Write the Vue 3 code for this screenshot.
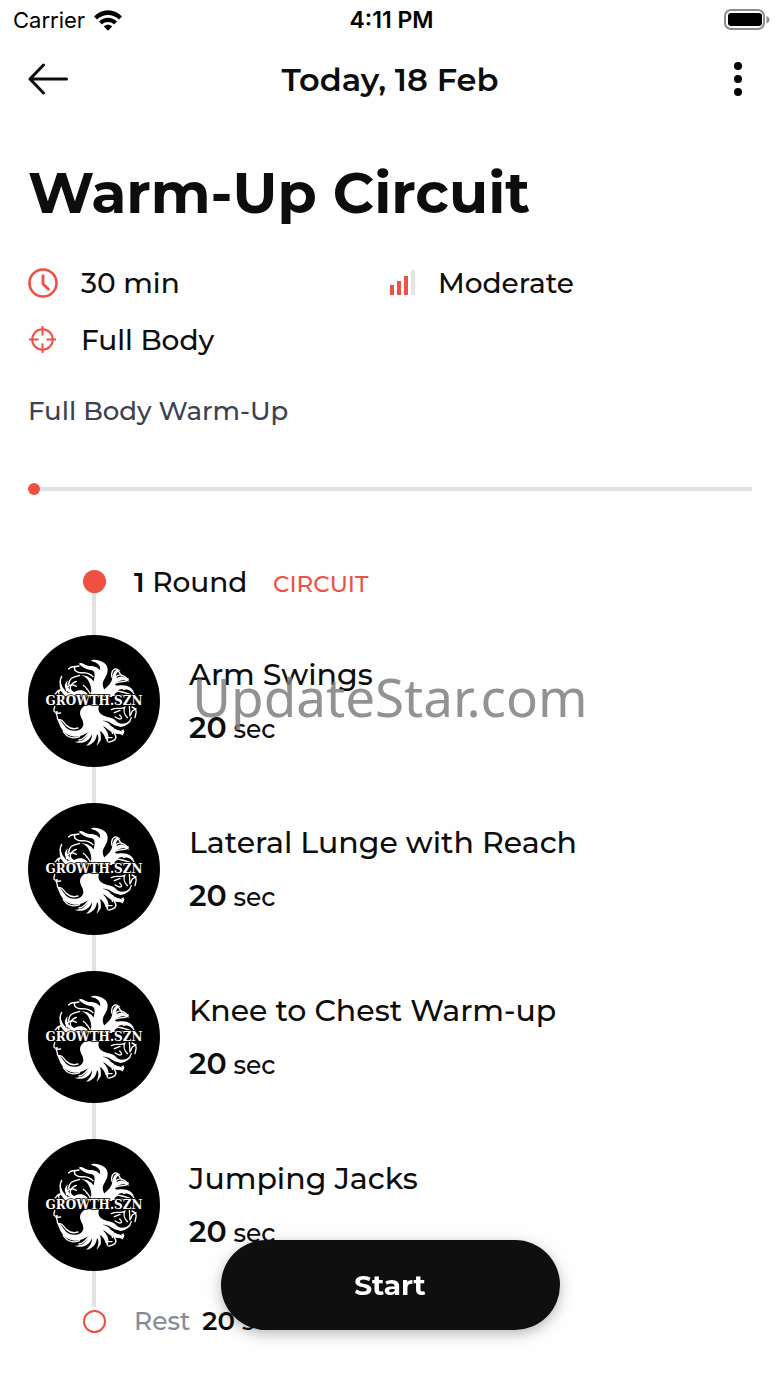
<template>
	<div class="page">
		<div class="status-bar">
			<div class="carrier">
				<span>Carrier</span>
				<svg class="wifi" viewBox="0 0 28 21" aria-hidden="true">
					<path d="M0 6.400C8-1.800 20-1.800 28 6.400L25 9.600C18.800 3.400 9.200 3.400 3 9.600Z" />
					<path d="M5 11.500C10.200 6.500 17.800 6.500 23 11.500L20 14.500C16.500 11.300 11.500 11.300 8 14.500Z" />
					<path d="M9.800 16.500C12.200 14.200 15.800 14.200 18.200 16.500L14 20.800Z" />
				</svg>
			</div>
			<time class="clock">4:11 PM</time>
			<svg class="battery" viewBox="0 0 46 22" aria-hidden="true">
				<rect x="1" y="1" width="39" height="19" rx="6" fill="none" stroke="#8c8c8c" stroke-width="2" />
				<rect x="4" y="4" width="34" height="13" rx="3" fill="#000" />
				<path d="M42.500 7v7.500c4-1.500 4-6 0-7.500z" fill="#8c8c8c" />
			</svg>
		</div>

		<header class="nav">
			<button class="icon-btn" type="button" aria-label="Back">
				<svg class="arrow" viewBox="0 0 40 32" aria-hidden="true">
					<path d="M15.500 2L2 16l13.500 14M2 16h36.500" />
				</svg>
			</button>
			<span class="nav-title">Today, 18 Feb</span>
			<button class="icon-btn more" type="button" aria-label="More options">
				<svg class="dots" viewBox="0 0 8 36" aria-hidden="true">
					<circle cx="4" cy="5" r="4" />
					<circle cx="4" cy="18" r="4" />
					<circle cx="4" cy="31" r="4" />
				</svg>
			</button>
		</header>

		<main class="content">
			<h1>Warm-Up Circuit</h1>

			<div class="facts">
				<div class="fact">
					<svg class="fact-icon" viewBox="0 0 30 30" aria-hidden="true">
						<circle cx="15" cy="15" r="13.500" fill="none" stroke="#ec5245" stroke-width="2.600" />
						<path d="M15 6.500V16l6.200 6" fill="none" stroke="#ec5245" stroke-width="2.800" />
					</svg>
					<span>30 min</span>
				</div>
				<div class="fact">
					<svg class="fact-icon level" viewBox="0 0 25 30" aria-hidden="true">
						<g fill="#ec5245">
							<rect x="0" y="17" width="4" height="10" />
							<rect x="7" y="13" width="4" height="14" />
							<rect x="14" y="8" width="4" height="19" />
						</g>
						<rect x="21" y="2" width="4" height="25" fill="#e4e4e4" />
					</svg>
					<span>Moderate</span>
				</div>
				<div class="fact">
					<svg class="fact-icon" viewBox="0 0 30 30" aria-hidden="true">
						<g fill="none" stroke="#ec5245" stroke-width="2">
							<circle cx="14.500" cy="14.500" r="10.300" />
							<path d="M14.500 1v9.500M14.500 18.500v9.500M1 14.500h9.500M18.500 14.500h9.500" />
						</g>
					</svg>
					<span>Full Body</span>
				</div>
			</div>

			<p class="summary">Full Body Warm-Up</p>

			<div class="progress"><span class="progress-dot"></span></div>

			<section class="timeline">
				<div class="step round">
					<div class="rail">
						<span class="dot"></span>
						<span class="line"></span>
					</div>
					<h2><strong>1</strong> Round <span class="tag">CIRCUIT</span></h2>
				</div>

				<div v-for="exercise in exercises" :key="exercise.name" class="step exercise">
					<div class="rail">
						<svg class="avatar" viewBox="24 30 396 396" role="img" aria-label="Growth.szn">
							<circle cx="222" cy="228" r="198" />
							<g fill="#fff">
								<!-- trunk and crown -->
								<path d="M176 116C187 109 194 122 209 123C226 123 233 128 240 135C243 119 230 111 211 107C245 104 264 116 263 135C262 157 245 164 249 184C252 200 265 201 276 190L267 216H208C216 205 216 188 206 169C201 159 193 155 184 151C202 151 214 160 221 169C225 151 226 140 216 136C199 132 190 130 176 116Z" />
								<path d="M253 193C270 178 275 171 277 158C279 142 285 131 302 135C292 140 287 146 288 160C300 153 316 152 329 171C316 164 303 163 291 172C281 181 285 183 299 181C321 178 337 187 342 202C326 190 312 190 297 194L275 216H249Z" />
								<path d="M210 216C195 192 177 193 163 201C144 194 139 184 143 166C129 179 133 195 150 204C133 202 120 188 122 155C115 180 119 203 141 216Z" />
								<!-- roots -->
								<path d="M196 241C174 254 179 271 187 284C199 309 175 322 151 316C131 309 130 289 115 282C117 307 132 327 153 333C174 339 191 330 205 322C200 343 184 351 164 350C185 359 207 351 216 328C219 344 207 356 198 362C220 360 230 342 231 326C239 337 234 351 229 363C245 351 244 333 239 319C253 322 254 341 265 355C263 333 273 330 248 303C259 307 266 318 278 323C292 330 302 324 310 332C307 312 296 319 280 309C270 301 265 289 247 288C267 284 276 301 292 303C312 306 325 297 335 287C316 296 300 301 289 289C278 276 259 279 244 268C234 260 234 250 237 241Z" />
							</g>
							<g fill="none" stroke="#fff" stroke-linecap="round" stroke-width="4">
								<path d="M146 132C153 122 166 126 177 123M165 126C159 136 172 145 187 143C201 143 210 146 219 155M217 107C230 105 248 111 253 119M276 157C272 139 281 129 293 133M287 158C296 143 310 150 324 163M305 153L292 134M287 174C307 166 320 175 325 162" />
								<path d="M125 154C116 169 122 186 133 197M146 178C148 154 166 157 179 151M158 201C143 190 154 174 169 169M190 181C201 189 206 198 212 209M169 184C151 174 139 184 139 198M106 207C118 188 130 193 141 211M117 209C113 199 121 193 129 195M310 193C321 190 333 192 342 207M273 206C294 193 312 202 330 208" />
								<path d="M104 245C98 262 105 262 111 262M111 259C108 275 114 288 125 302M118 284C131 282 133 301 145 306M130 320C140 336 158 343 179 335M177 345C187 344 195 338 203 326M219 329C217 344 211 353 205 359M239 323L240 346M252 321L260 337L276 338M283 326C292 337 289 346 267 351M306 317C308 330 314 324 309 315" />
								<path d="M274 254C289 246 301 254 314 247C310 257 313 270 323 278M283 263L300 256M299 270C313 284 298 285 286 276M328 242L330 274L337 258L348 251M336 246C354 252 348 264 345 278M334 278C330 292 315 303 300 304M278 307L277 326M108 265L122 264M141 302C150 311 160 314 174 309" />
								<path d="M112 211H340" />
							</g>
							<text class="brand" x="222" y="240" text-anchor="middle">GROWTH.SZN</text>
						</svg>
						<span class="line"></span>
					</div>
					<div class="details">
						<h3>{{ exercise.name }}</h3>
						<p><strong>{{ exercise.seconds }}</strong> sec</p>
					</div>
				</div>

				<div class="step rest">
					<div class="rail"><span class="dot hollow"></span></div>
					<p><span class="rest-label">Rest</span><strong>20</strong> sec</p>
				</div>
			</section>
		</main>

		<div class="watermark">UpdateStar.com</div>

		<div class="footer">
			<button class="start-btn" type="button">Start</button>
		</div>
	</div>
</template>

<script setup>
import { ref } from 'vue';

const exercises = ref([
	{ name: 'Arm Swings', seconds: 20 },
	{ name: 'Lateral Lunge with Reach', seconds: 20 },
	{ name: 'Knee to Chest Warm-up', seconds: 20 },
	{ name: 'Jumping Jacks', seconds: 20 }
]);
</script>

<style>
body { background: #fefefe; }
</style>

<style scoped>
.page {
	position: relative;
	min-height: 100vh;
	box-sizing: border-box;
	padding-bottom: 48px;
	background: #fefefe;
	color: #0d0d0d;
	font-family: Montserrat, Inter, sans-serif;
	font-size: 28px;
	font-weight: 500;
}

h1, h2, h3, p { margin: 0; font-weight: 500; }
strong { font-weight: 600; }

.status-bar {
	display: grid;
	grid-template-columns: 1fr auto 1fr;
	align-items: center;
	height: 40px;
	padding: 0 10px 0 13px;
	font-family: Inter, sans-serif;
	font-size: 22px;
	font-weight: 400;
	color: #000;
}

.carrier { display: flex; align-items: center; gap: 9px; }
.wifi { width: 28px; height: 21px; }
.clock { font-size: 23px; font-weight: 600; }
.battery { width: 46px; height: 22px; justify-self: end; }

.nav {
	display: grid;
	grid-template-columns: 1fr auto 1fr;
	align-items: center;
	height: 78px;
	padding: 0 28px;
}

.nav-title { font-size: 32px; font-weight: 600; }

.icon-btn {
	display: flex;
	justify-self: start;
	padding: 0;
	border: 0;
	background: none;
	cursor: pointer;
}

.icon-btn.more { justify-self: end; padding: 0 10px; }

.arrow {
	width: 40px;
	height: 32px;
	fill: none;
	stroke: #0d0d0d;
	stroke-width: 3;
	stroke-linecap: round;
	stroke-linejoin: round;
}

.dots { width: 8px; height: 36px; }

.content { padding: 39px 28px 0; }

h1 {
	font-size: 57px;
	font-weight: 700;
	line-height: 72px;
}

.facts {
	display: grid;
	grid-template-columns: 1fr 1fr;
	margin-top: 25px;
}

.fact {
	display: flex;
	align-items: center;
	gap: 23px;
	height: 57px;
}

.fact-icon { width: 30px; height: 30px; }
.fact-icon.level { width: 25px; }

.summary {
	margin-top: 25px;
	font-size: 26px;
	line-height: 36px;
	color: #3c4250;
}

.progress {
	display: flex;
	align-items: center;
	height: 12px;
	margin-top: 54px;
	background: linear-gradient(#e0e2e2, #e0e2e2) center / 100% 4px no-repeat;
}

.progress-dot {
	width: 12px;
	height: 12px;
	border-radius: 50%;
	background: #f05042;
}

.timeline { margin-top: 75px; }

.step { display: flex; }

.rail {
	display: flex;
	flex-direction: column;
	align-items: center;
	width: 132px;
}

.line {
	flex: 1;
	width: 4px;
	background: #e0e2e2;
}

.dot {
	box-sizing: border-box;
	width: 23px;
	height: 23px;
	border-radius: 50%;
	background: #f05042;
}

.dot.hollow {
	border: 2px solid #f05042;
	background: none;
}

.round { height: 65px; }

.round h2 {
	height: 24px;
	margin-left: -26px;
	font-size: 28px;
	line-height: 24px;
}

.tag {
	margin-left: 18px;
	font-size: 23px;
	font-weight: 500;
	color: #ec5245;
}

.exercise { height: 168px; }

.avatar { width: 132px; height: 132px; }

.brand {
	font-family: "DejaVu Serif", serif;
	font-size: 36px;
	font-weight: 700;
	fill: #fff;
	stroke: #000;
	stroke-width: 5px;
	paint-order: stroke;
}

.details { padding: 20px 0 0 29px; }

h3 {
	font-size: 30px;
	line-height: 40px;
}

.details p {
	margin-top: 13px;
	font-size: 25px;
	line-height: 40px;
}

.details strong { font-size: 30px; }

.rest { align-items: center; height: 28px; }
.rest p { margin-left: -26px; font-size: 25px; }
.rest strong { font-size: 26px; }
.rest-label { margin-right: 12px; color: #858b99; }

.watermark {
	position: absolute;
	top: 659px;
	left: 0;
	right: 0;
	text-align: center;
	font-family: "Noto Sans", sans-serif;
	font-size: 53px;
	font-weight: 400;
	line-height: 76px;
	color: #808080;
	opacity: 0.85;
	pointer-events: none;
}

.footer {
	position: fixed;
	bottom: 57px;
	left: 0;
	right: 0;
	display: flex;
	justify-content: center;
}

.start-btn {
	width: 339px;
	height: 90px;
	border: 0;
	border-radius: 45px;
	background: #0f0f0f;
	box-shadow: 0 4px 14px rgba(0, 0, 0, 0.28);
	color: #fff;
	font: inherit;
	font-weight: 700;
	cursor: pointer;
}
</style>
